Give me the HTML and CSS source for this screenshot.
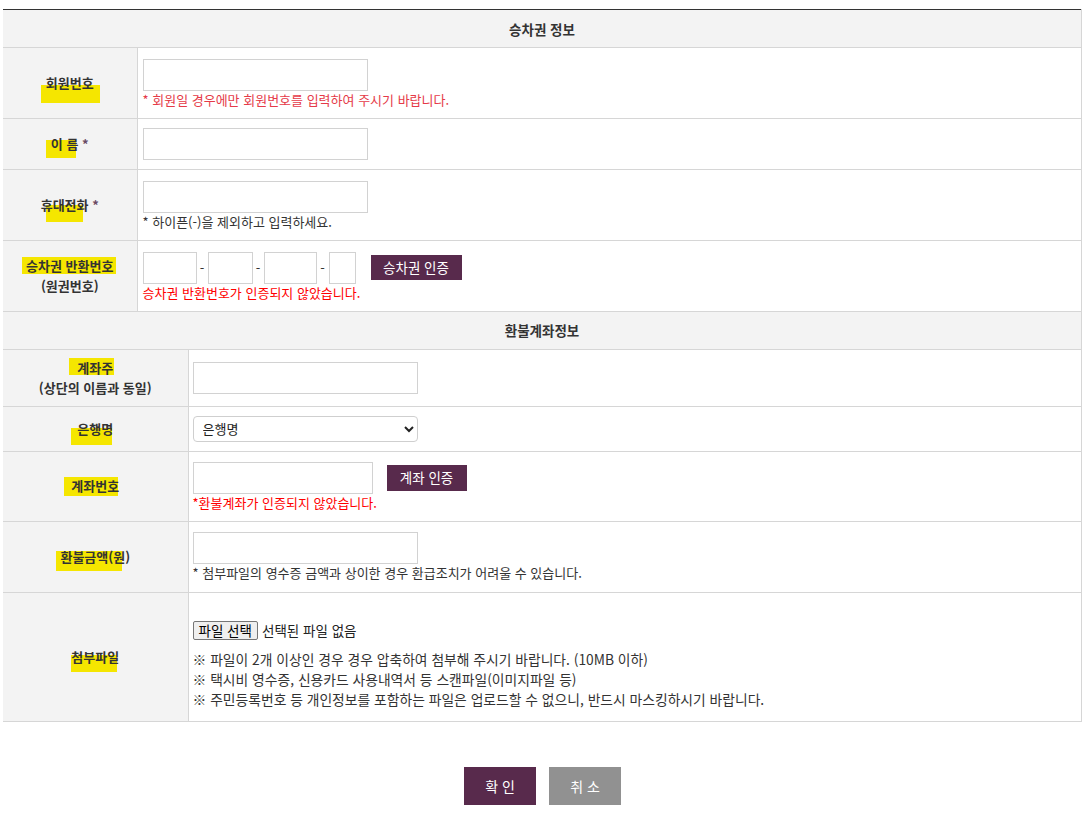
FILE: index.html
```html
<!DOCTYPE html>
<html lang="ko">
<head>
<meta charset="utf-8">
<title>승차권 환불 신청</title>
<link rel="stylesheet" href="styles.css">
</head>
<body>
<div class="wrap">
  <table class="form t1">
    <colgroup><col class="c-lab"><col></colgroup>
    <tr>
      <th colspan="2" class="sec">승차권 정보</th>
    </tr>
    <tr class="h71">
      <td class="lab"><span class="lbl hl1">회원번호</span></td>
      <td class="val">
        <input type="text" class="in w225">
        <p class="note red1">* 회원일 경우에만 회원번호를 입력하여 주시기 바랍니다.</p>
      </td>
    </tr>
    <tr class="h51">
      <td class="lab"><span class="lbl hl2">이 름</span> <span class="star">*</span></td>
      <td class="val"><input type="text" class="in w225"></td>
    </tr>
    <tr class="h71">
      <td class="lab"><span class="lbl hl3">휴대전화</span> <span class="star">*</span></td>
      <td class="val">
        <input type="text" class="in w225">
        <p class="note">* 하이픈(-)을 제외하고 입력하세요.</p>
      </td>
    </tr>
    <tr class="h71">
      <td class="lab"><span class="lbl hl4">승차권 반환번호</span><br>(원권번호)</td>
      <td class="val">
        <div class="ticket">
          <input type="text" class="in w54"><span class="dash">-</span><input type="text" class="in w45"><span class="dash">-</span><input type="text" class="in w53"><span class="dash">-</span><input type="text" class="in w27">
          <button type="button" class="btn-auth b91">승차권 인증</button>
        </div>
        <p class="note red">승차권 반환번호가 인증되지 않았습니다.</p>
      </td>
    </tr>
  </table>

  <table class="form t2">
    <colgroup><col class="c-lab2"><col></colgroup>
    <tr>
      <th colspan="2" class="sec">환불계좌정보</th>
    </tr>
    <tr class="h57">
      <td class="lab"><span class="lbl hl5">계좌주</span><br>(상단의 이름과 동일)</td>
      <td class="val"><input type="text" class="in w225"></td>
    </tr>
    <tr class="h45">
      <td class="lab"><span class="lbl hl6">은행명</span></td>
      <td class="val">
        <select class="sel">
          <option>은행명</option>
        </select>
      </td>
    </tr>
    <tr class="h70">
      <td class="lab"><span class="lbl hl7">계좌번호</span></td>
      <td class="val">
        <div class="acct">
          <input type="text" class="in w180">
          <button type="button" class="btn-auth b80">계좌 인증</button>
        </div>
        <p class="note red">*환불계좌가 인증되지 않았습니다.</p>
      </td>
    </tr>
    <tr class="h71">
      <td class="lab"><span class="lbl hl8">환불금액(원)</span></td>
      <td class="val">
        <input type="text" class="in w225">
        <p class="note">* 첨부파일의 영수증 금액과 상이한 경우 환급조치가 어려울 수 있습니다.</p>
      </td>
    </tr>
    <tr class="h129">
      <td class="lab"><span class="lbl hl9">첨부파일</span></td>
      <td class="val val-file">
        <div class="file">
          <button type="button" class="file-btn">파일 선택</button><span class="file-txt">선택된 파일 없음</span>
        </div>
        <ul class="notes">
          <li>※ 파일이 2개 이상인 경우 경우 압축하여 첨부해 주시기 바랍니다. (10MB 이하)</li>
          <li>※ 택시비 영수증, 신용카드 사용내역서 등 스캔파일(이미지파일 등)</li>
          <li>※ 주민등록번호 등 개인정보를 포함하는 파일은 업로드할 수 없으니, 반드시 마스킹하시기 바랍니다.</li>
        </ul>
      </td>
    </tr>
  </table>

  <div class="actions">
    <button type="button" class="act ok">확 인</button>
    <button type="button" class="act cancel">취 소</button>
  </div>
</div>
</body>
</html>
```

FILE: styles.css
```css
* { box-sizing: border-box; }

html, body {
  margin: 0;
  padding: 0;
  background: #fff;
}

body {
  font-family: "Noto Sans CJK KR", "Noto Sans", sans-serif;
  font-size: 13px;
  color: #333;
}

.wrap {
  width: 1079px;
  margin-left: 3px;
  padding-top: 9px;
}

.form {
  width: 100%;
  border-collapse: collapse;
  table-layout: fixed;
}

.c-lab { width: 134px; }
.c-lab2 { width: 185px; }

.t1 { border-top: 1px solid #333; }

.form th,
.form td {
  border-bottom: 1px solid #d6d6d6;
  border-right: 1px solid #d6d6d6;
  padding: 0;
  vertical-align: middle;
}

.sec {
  height: 38px;
  background: #f3f3f3;
  font-weight: bold;
  font-size: 13.5px;
  color: #333;
  text-align: center;
  line-height: 16px;
}
.t2 .sec { height: 37px; }

.lab {
  background: #f3f3f3;
  text-align: center;
  font-weight: bold;
  font-size: 13px;
  color: #333;
  line-height: 20px;
}

.t1 .val { padding-left: 5px; }
.t2 .val { padding-left: 4px; }
.t2 .val-file { padding-top: 16px; }

.h71 td { height: 71px; }
.h51 td { height: 51px; }
.h57 td { height: 57px; }
.h45 td { height: 45px; }
.h70 td { height: 70px; }
.h129 td { height: 129px; }

.star {
  color: #6a4a63;
  font-weight: bold;
}

/* yellow marker highlights */
.lbl {
  position: relative;
  z-index: 0;
  display: inline-block;
}
.lbl::before {
  content: "";
  position: absolute;
  z-index: -1;
  background: #f5e600;
}
.hl1::before { left: -5px;  top: 12px; width: 59px; height: 18px; }
.hl2::before { left: -5px;  top: 6px;  width: 30px; height: 18px; }
.hl3::before { left: 5px;   top: 10px; width: 37px; height: 17px; }
.hl4::before { left: -4px;  top: 1px;  width: 94px; height: 17px; }
.hl5::before { left: -8px;  top: 0;    width: 45px; height: 17px; }
.hl6::before { left: -6px;  top: 9px;  width: 41px; height: 17px; }
.hl7::before { left: -7px;  top: 1px;  width: 54px; height: 19px; }
.hl8::before { left: -4px;  top: 4px;  width: 66px; height: 20px; }
.hl9::before { left: 0;     top: 8px;  width: 46px; height: 17px; }

.in {
  height: 32px;
  border: 1px solid #d2d2d2;
  background: #fff;
  padding: 0 6px;
  font: inherit;
  margin: 0;
  vertical-align: middle;
}
.w225 { width: 225px; }
.w180 { width: 180px; }
.w54 { width: 54px; }
.w45 { width: 45px; }
.w53 { width: 53px; }
.w27 { width: 27px; }

.note {
  margin: 0;
  line-height: 17px;
  font-size: 13px;
  color: #333;
}
.red1 { color: #e53a48; }
.red { color: #ff0000; }

.ticket,
.acct {
  display: flex;
  align-items: center;
}

.dash {
  width: 11px;
  text-align: center;
  font-size: 13px;
  color: #333;
}
.dash:nth-of-type(3) { width: 12px; }

.btn-auth {
  margin: 0 0 0 15px;
  border: 0;
  background: #582a4c;
  color: #fff;
  font-family: inherit;
  font-size: 13.5px;
  height: 25px;
  padding: 0;
  line-height: 25px;
}
.b91 { width: 91px; }
.b80 { width: 80px; height: 26px; margin-left: 14px; }

.sel {
  width: 225px;
  height: 26px;
  border: 1px solid #cfcfcf;
  border-radius: 4px;
  background: #fff;
  font-family: inherit;
  font-size: 13px;
  color: #222;
  padding: 0 5px;
  margin: 0;
}

.file {
  display: flex;
  align-items: center;
  margin-bottom: 9px;
}
.file-btn {
  margin: 0;
  height: 19px;
  padding: 0 5px;
  border: 1px solid #767676;
  border-radius: 2px;
  background: #efefef;
  color: #000;
  font-family: inherit;
  font-size: 13.5px;
  line-height: 17px;
}
.file-txt {
  margin-left: 4px;
  font-size: 13.5px;
  color: #222;
}

.notes {
  list-style: none;
  margin: 0;
  padding: 0;
  font-size: 13.8px;
  line-height: 20px;
  color: #333;
}

.actions {
  display: flex;
  justify-content: center;
  gap: 13px;
  margin-top: 45px;
}
.act {
  width: 72px;
  height: 38px;
  border: 0;
  padding: 0;
  color: #fff;
  font-family: inherit;
  font-size: 14px;
}
.ok { background: #582a4c; }
.cancel { background: #919191; }
```
